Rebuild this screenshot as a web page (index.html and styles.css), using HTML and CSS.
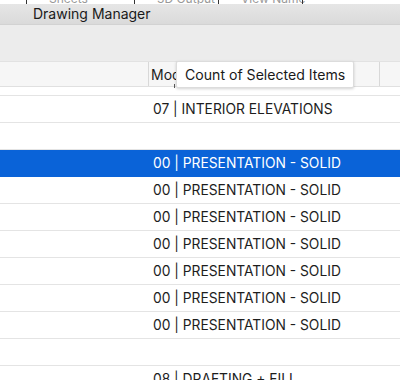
FILE: index.html
```html
<!DOCTYPE html>
<html>
<head>
<meta charset="utf-8">
<link rel="stylesheet" href="styles.css">
</head>
<body>
<div class="window">
  <div class="tabs">
    <div class="tab t1"></div>
    <div class="tab t2"><span>Sheets</span></div>
    <div class="tab t3"><span>3D Output</span></div>
    <div class="tab t4"><span>View Name</span></div>
    <div class="tab t5"></div>
  </div>
  <div class="titlebar">Drawing Manager</div>
  <div class="toolbar"></div>
  <div class="table">
    <div class="header">
      <div class="hcell first"></div>
      <div class="hcell mod">Mod</div>
      <div class="hcell rest"></div>
    </div>
    <div class="gap"></div>
    <div class="row"><div class="c1"></div><div class="c2">07 | INTERIOR ELEVATIONS</div></div>
    <div class="row"><div class="c1"></div><div class="c2"></div></div>
    <div class="row selected"><div class="c1"></div><div class="c2">00 | PRESENTATION - SOLID</div></div>
    <div class="row"><div class="c1"></div><div class="c2">00 | PRESENTATION - SOLID</div></div>
    <div class="row"><div class="c1"></div><div class="c2">00 | PRESENTATION - SOLID</div></div>
    <div class="row"><div class="c1"></div><div class="c2">00 | PRESENTATION - SOLID</div></div>
    <div class="row"><div class="c1"></div><div class="c2">00 | PRESENTATION - SOLID</div></div>
    <div class="row"><div class="c1"></div><div class="c2">00 | PRESENTATION - SOLID</div></div>
    <div class="row"><div class="c1"></div><div class="c2">00 | PRESENTATION - SOLID</div></div>
    <div class="row"><div class="c1"></div><div class="c2"></div></div>
    <div class="row"><div class="c1"></div><div class="c2">08 | DRAFTING + FILL</div></div>
  </div>
  <div class="tooltip">Count of Selected Items</div>
  <div class="caret"></div>
</div>
</body>
</html>
```
FILE: styles.css
```css
* { box-sizing: border-box; }
html, body { margin: 0; padding: 0; background: #fff; }
body {
  font-family: Inter, "Noto Sans", "Liberation Sans", sans-serif;
  font-size: 13.8px;
  color: #1d1d1d;
  width: 400px;
  height: 380px;
  overflow: hidden;
}
.window { position: relative; width: 400px; height: 380px; overflow: hidden; }
.tabs {
  display: flex;
  height: 4px;
  background: #fff;
  overflow: hidden;
}
.tab { height: 4px; border-left: 1px solid #333; position: relative; }
.tab span {
  position: absolute; top: -9px; left: 22px;
  font-size: 12px; color: #999; white-space: nowrap;
}
.t1 { width: 26px; border-left: none; }
.t2 { width: 108px; }
.t3 { width: 84px; }
.t4 { width: 84px; }
.t5 { flex: 1; }
.titlebar {
  height: 21px;
  background: linear-gradient(#e6e6e6, #dadada);
  border-bottom: 1px solid #d2d2d2;
  padding-left: 33px;
  line-height: 20px;
  font-size: 14px;
  color: #1a1a1a;
}
.toolbar {
  height: 36px;
  background: #ececec;
}
.table { background: #fff; }
.header {
  display: flex;
  height: 26px;
  background: #f6f6f6;
  border-top: 1px solid #e2e2e2;
  border-bottom: 1px solid #e0e0e0;
}
.hcell { height: 100%; }
.first { width: 148px; }
.mod {
  width: 231px;
  border-left: 1px solid #d8d8d8;
  padding-left: 2px;
  line-height: 26px;
  font-size: 14px;
}
.rest { flex: 1; border-left: 1px solid #d8d8d8; }
.gap {
  height: 9px;
  border-bottom: 1px solid #e4e4e4;
}
.row {
  display: flex;
  height: 27px;
  border-bottom: 1px solid #e4e4e4;
  align-items: center;
}
.c1 { width: 153px; }
.c2 { flex: 1; white-space: nowrap; }
.row.selected {
  background: #0a63d8;
  color: #fff;
  border-bottom-color: #0a63d8;
}
.tooltip {
  position: absolute;
  left: 176px;
  top: 61px;
  width: 178px;
  height: 27px;
  background: #fff;
  border: 1px solid #dcdcdc;
  border-radius: 2px;
  box-shadow: 0 1px 3px rgba(0,0,0,0.18);
  padding-left: 8px;
  line-height: 25px;
  font-size: 14.1px;
  color: #1a1a1a;
  white-space: nowrap;
}
.caret {
  position: absolute;
  left: 174px;
  top: 84px;
  width: 1px;
  height: 4px;
  background: #555;
}
```
